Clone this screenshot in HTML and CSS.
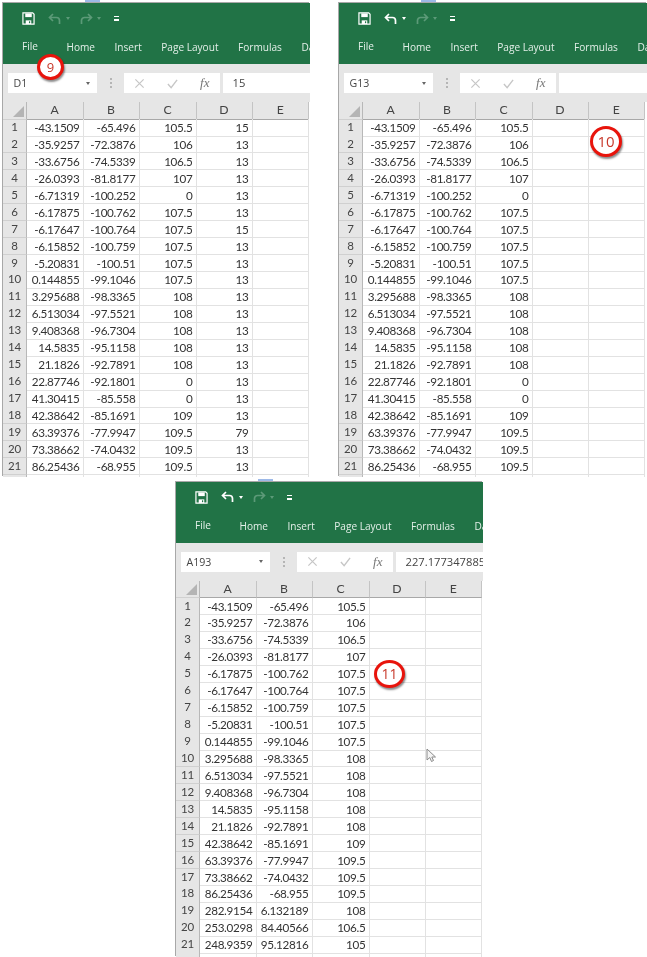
FILE: index.html
```html
<!DOCTYPE html>
<html lang="en">
<head>
<meta charset="utf-8">
<title>Excel sheets</title>
<link rel="stylesheet" href="styles.css">
</head>
<body>
<i class="tick tick-a"></i><i class="tick tick-b"></i><i class="tick tick-c"></i>
<section class="win win-a">
  <div class="ribbon">
    <div class="qat">
      <svg class="save" viewBox="0 0 14 14"><path d="M1 1h10.500L13 2.500V13H1z" fill="none" stroke="#fff" stroke-width="1.300"/><path d="M3.500 1.500h7v4h-7z" fill="#fff"/><path d="M4 9h6v4H4z" fill="#fff"/><path d="M7.500 10h1.300v2H7.500z" fill="#217346"/></svg>
      <svg class="arrow dim" viewBox="0 0 14 12"><path d="M5 1L1.500 4.500 5 8M2 4.500h6.500a3 3 0 0 1 3 3V11" fill="none" stroke="currentColor" stroke-width="1.700"/></svg><i class="caret dim"></i>
      <svg class="arrow dim" viewBox="0 0 14 12"><path d="M9 1l3.500 3.500L9 8M12 4.500H5.500a3 3 0 0 0-3 3V11" fill="none" stroke="currentColor" stroke-width="1.700"/></svg><i class="caret dim"></i>
      <span class="more"></span>
    </div>
    <nav class="tabs"><span class="file">File</span><span>Home</span><span>Insert</span><span>Page Layout</span><span>Formulas</span><span>Da</span></nav>
  </div>
  <div class="fbar">
    <div class="namebox"><span>D1</span><i class="caret"></i></div>
    <div class="dots"></div>
    <div class="fx"><svg viewBox="0 0 12 12"><path d="M1.500 1.500l9 9M10.500 1.500l-9 9" stroke="#c6c6c6" stroke-width="1.300"/></svg><svg viewBox="0 0 12 12"><path d="M1 6.500l3.500 4L11 2" fill="none" stroke="#c6c6c6" stroke-width="1.500"/></svg><em>fx</em></div>
    <div class="formula">15</div>
  </div>
  <div class="sheet">
    <div class="row head"><span class="corner"></span><span>A</span><span>B</span><span>C</span><span>D</span><span>E</span></div>
    <div class="row"><span>1</span><span>-43.1509</span><span>-65.496</span><span>105.5</span><span>15</span><span></span></div>
    <div class="row"><span>2</span><span>-35.9257</span><span>-72.3876</span><span>106</span><span>13</span><span></span></div>
    <div class="row"><span>3</span><span>-33.6756</span><span>-74.5339</span><span>106.5</span><span>13</span><span></span></div>
    <div class="row"><span>4</span><span>-26.0393</span><span>-81.8177</span><span>107</span><span>13</span><span></span></div>
    <div class="row"><span>5</span><span>-6.71319</span><span>-100.252</span><span>0</span><span>13</span><span></span></div>
    <div class="row"><span>6</span><span>-6.17875</span><span>-100.762</span><span>107.5</span><span>13</span><span></span></div>
    <div class="row"><span>7</span><span>-6.17647</span><span>-100.764</span><span>107.5</span><span>15</span><span></span></div>
    <div class="row"><span>8</span><span>-6.15852</span><span>-100.759</span><span>107.5</span><span>13</span><span></span></div>
    <div class="row"><span>9</span><span>-5.20831</span><span>-100.51</span><span>107.5</span><span>13</span><span></span></div>
    <div class="row"><span>10</span><span>0.144855</span><span>-99.1046</span><span>107.5</span><span>13</span><span></span></div>
    <div class="row"><span>11</span><span>3.295688</span><span>-98.3365</span><span>108</span><span>13</span><span></span></div>
    <div class="row"><span>12</span><span>6.513034</span><span>-97.5521</span><span>108</span><span>13</span><span></span></div>
    <div class="row"><span>13</span><span>9.408368</span><span>-96.7304</span><span>108</span><span>13</span><span></span></div>
    <div class="row"><span>14</span><span>14.5835</span><span>-95.1158</span><span>108</span><span>13</span><span></span></div>
    <div class="row"><span>15</span><span>21.1826</span><span>-92.7891</span><span>108</span><span>13</span><span></span></div>
    <div class="row"><span>16</span><span>22.87746</span><span>-92.1801</span><span>0</span><span>13</span><span></span></div>
    <div class="row"><span>17</span><span>41.30415</span><span>-85.558</span><span>0</span><span>13</span><span></span></div>
    <div class="row"><span>18</span><span>42.38642</span><span>-85.1691</span><span>109</span><span>13</span><span></span></div>
    <div class="row"><span>19</span><span>63.39376</span><span>-77.9947</span><span>109.5</span><span>79</span><span></span></div>
    <div class="row"><span>20</span><span>73.38662</span><span>-74.0432</span><span>109.5</span><span>13</span><span></span></div>
    <div class="row"><span>21</span><span>86.25436</span><span>-68.955</span><span>109.5</span><span>13</span><span></span></div>
    <div class="row"><span></span><span></span><span></span><span></span><span></span><span></span></div>
  </div>
  <div class="badge badge-9">9</div>
</section>

<section class="win win-b">
  <div class="ribbon">
    <div class="qat">
      <svg class="save" viewBox="0 0 14 14"><path d="M1 1h10.500L13 2.500V13H1z" fill="none" stroke="#fff" stroke-width="1.300"/><path d="M3.500 1.500h7v4h-7z" fill="#fff"/><path d="M4 9h6v4H4z" fill="#fff"/><path d="M7.500 10h1.300v2H7.500z" fill="#217346"/></svg>
      <svg class="arrow" viewBox="0 0 14 12"><path d="M5 1L1.500 4.500 5 8M2 4.500h6.500a3 3 0 0 1 3 3V11" fill="none" stroke="currentColor" stroke-width="1.700"/></svg><i class="caret"></i>
      <svg class="arrow dim" viewBox="0 0 14 12"><path d="M9 1l3.500 3.500L9 8M12 4.500H5.500a3 3 0 0 0-3 3V11" fill="none" stroke="currentColor" stroke-width="1.700"/></svg><i class="caret dim"></i>
      <span class="more"></span>
    </div>
    <nav class="tabs"><span class="file">File</span><span>Home</span><span>Insert</span><span>Page Layout</span><span>Formulas</span><span>Da</span></nav>
  </div>
  <div class="fbar">
    <div class="namebox"><span>G13</span><i class="caret"></i></div>
    <div class="dots"></div>
    <div class="fx"><svg viewBox="0 0 12 12"><path d="M1.500 1.500l9 9M10.500 1.500l-9 9" stroke="#c6c6c6" stroke-width="1.300"/></svg><svg viewBox="0 0 12 12"><path d="M1 6.500l3.500 4L11 2" fill="none" stroke="#c6c6c6" stroke-width="1.500"/></svg><em>fx</em></div>
    <div class="formula"></div>
  </div>
  <div class="sheet">
    <div class="row head"><span class="corner"></span><span>A</span><span>B</span><span>C</span><span>D</span><span>E</span></div>
    <div class="row"><span>1</span><span>-43.1509</span><span>-65.496</span><span>105.5</span><span></span><span></span></div>
    <div class="row"><span>2</span><span>-35.9257</span><span>-72.3876</span><span>106</span><span></span><span></span></div>
    <div class="row"><span>3</span><span>-33.6756</span><span>-74.5339</span><span>106.5</span><span></span><span></span></div>
    <div class="row"><span>4</span><span>-26.0393</span><span>-81.8177</span><span>107</span><span></span><span></span></div>
    <div class="row"><span>5</span><span>-6.71319</span><span>-100.252</span><span>0</span><span></span><span></span></div>
    <div class="row"><span>6</span><span>-6.17875</span><span>-100.762</span><span>107.5</span><span></span><span></span></div>
    <div class="row"><span>7</span><span>-6.17647</span><span>-100.764</span><span>107.5</span><span></span><span></span></div>
    <div class="row"><span>8</span><span>-6.15852</span><span>-100.759</span><span>107.5</span><span></span><span></span></div>
    <div class="row"><span>9</span><span>-5.20831</span><span>-100.51</span><span>107.5</span><span></span><span></span></div>
    <div class="row"><span>10</span><span>0.144855</span><span>-99.1046</span><span>107.5</span><span></span><span></span></div>
    <div class="row"><span>11</span><span>3.295688</span><span>-98.3365</span><span>108</span><span></span><span></span></div>
    <div class="row"><span>12</span><span>6.513034</span><span>-97.5521</span><span>108</span><span></span><span></span></div>
    <div class="row"><span class="active">13</span><span>9.408368</span><span>-96.7304</span><span>108</span><span></span><span></span></div>
    <div class="row"><span>14</span><span>14.5835</span><span>-95.1158</span><span>108</span><span></span><span></span></div>
    <div class="row"><span>15</span><span>21.1826</span><span>-92.7891</span><span>108</span><span></span><span></span></div>
    <div class="row"><span>16</span><span>22.87746</span><span>-92.1801</span><span>0</span><span></span><span></span></div>
    <div class="row"><span>17</span><span>41.30415</span><span>-85.558</span><span>0</span><span></span><span></span></div>
    <div class="row"><span>18</span><span>42.38642</span><span>-85.1691</span><span>109</span><span></span><span></span></div>
    <div class="row"><span>19</span><span>63.39376</span><span>-77.9947</span><span>109.5</span><span></span><span></span></div>
    <div class="row"><span>20</span><span>73.38662</span><span>-74.0432</span><span>109.5</span><span></span><span></span></div>
    <div class="row"><span>21</span><span>86.25436</span><span>-68.955</span><span>109.5</span><span></span><span></span></div>
    <div class="row"><span></span><span></span><span></span><span></span><span></span><span></span></div>
  </div>
  <div class="badge badge-10">10</div>
</section>

<section class="win win-c">
  <div class="ribbon">
    <div class="qat">
      <svg class="save" viewBox="0 0 14 14"><path d="M1 1h10.500L13 2.500V13H1z" fill="none" stroke="#fff" stroke-width="1.300"/><path d="M3.500 1.500h7v4h-7z" fill="#fff"/><path d="M4 9h6v4H4z" fill="#fff"/><path d="M7.500 10h1.300v2H7.500z" fill="#217346"/></svg>
      <svg class="arrow" viewBox="0 0 14 12"><path d="M5 1L1.500 4.500 5 8M2 4.500h6.500a3 3 0 0 1 3 3V11" fill="none" stroke="currentColor" stroke-width="1.700"/></svg><i class="caret"></i>
      <svg class="arrow dim" viewBox="0 0 14 12"><path d="M9 1l3.500 3.500L9 8M12 4.500H5.500a3 3 0 0 0-3 3V11" fill="none" stroke="currentColor" stroke-width="1.700"/></svg><i class="caret dim"></i>
      <span class="more"></span>
    </div>
    <nav class="tabs"><span class="file">File</span><span>Home</span><span>Insert</span><span>Page Layout</span><span>Formulas</span><span>Da</span></nav>
  </div>
  <div class="fbar">
    <div class="namebox"><span>A193</span><i class="caret"></i></div>
    <div class="dots"></div>
    <div class="fx"><svg viewBox="0 0 12 12"><path d="M1.500 1.500l9 9M10.500 1.500l-9 9" stroke="#c6c6c6" stroke-width="1.300"/></svg><svg viewBox="0 0 12 12"><path d="M1 6.500l3.500 4L11 2" fill="none" stroke="#c6c6c6" stroke-width="1.500"/></svg><em>fx</em></div>
    <div class="formula">227.177347885</div>
  </div>
  <div class="sheet">
    <div class="row head"><span class="corner"></span><span>A</span><span>B</span><span>C</span><span>D</span><span>E</span></div>
    <div class="row"><span>1</span><span>-43.1509</span><span>-65.496</span><span>105.5</span><span></span><span></span></div>
    <div class="row"><span>2</span><span>-35.9257</span><span>-72.3876</span><span>106</span><span></span><span></span></div>
    <div class="row"><span>3</span><span>-33.6756</span><span>-74.5339</span><span>106.5</span><span></span><span></span></div>
    <div class="row"><span>4</span><span>-26.0393</span><span>-81.8177</span><span>107</span><span></span><span></span></div>
    <div class="row"><span>5</span><span>-6.17875</span><span>-100.762</span><span>107.5</span><span></span><span></span></div>
    <div class="row"><span>6</span><span>-6.17647</span><span>-100.764</span><span>107.5</span><span></span><span></span></div>
    <div class="row"><span>7</span><span>-6.15852</span><span>-100.759</span><span>107.5</span><span></span><span></span></div>
    <div class="row"><span>8</span><span>-5.20831</span><span>-100.51</span><span>107.5</span><span></span><span></span></div>
    <div class="row"><span>9</span><span>0.144855</span><span>-99.1046</span><span>107.5</span><span></span><span></span></div>
    <div class="row"><span>10</span><span>3.295688</span><span>-98.3365</span><span>108</span><span></span><span></span></div>
    <div class="row"><span>11</span><span>6.513034</span><span>-97.5521</span><span>108</span><span></span><span></span></div>
    <div class="row"><span>12</span><span>9.408368</span><span>-96.7304</span><span>108</span><span></span><span></span></div>
    <div class="row"><span>13</span><span>14.5835</span><span>-95.1158</span><span>108</span><span></span><span></span></div>
    <div class="row"><span>14</span><span>21.1826</span><span>-92.7891</span><span>108</span><span></span><span></span></div>
    <div class="row"><span>15</span><span>42.38642</span><span>-85.1691</span><span>109</span><span></span><span></span></div>
    <div class="row"><span>16</span><span>63.39376</span><span>-77.9947</span><span>109.5</span><span></span><span></span></div>
    <div class="row"><span>17</span><span>73.38662</span><span>-74.0432</span><span>109.5</span><span></span><span></span></div>
    <div class="row"><span>18</span><span>86.25436</span><span>-68.955</span><span>109.5</span><span></span><span></span></div>
    <div class="row"><span>19</span><span>282.9154</span><span>6.132189</span><span>108</span><span></span><span></span></div>
    <div class="row"><span>20</span><span>253.0298</span><span>84.40566</span><span>106.5</span><span></span><span></span></div>
    <div class="row"><span>21</span><span>248.9359</span><span>95.12816</span><span>105</span><span></span><span></span></div>
    <div class="row"><span></span><span></span><span></span><span></span><span></span><span></span></div>
  </div>
  <div class="badge badge-11">11</div>
  <svg class="cursor" viewBox="0 0 10 15"><path d="M1 1v11l2.800-2.500L5.500 13.500l2-1L5.800 9H9.500z" fill="#f4f4f4" stroke="#8a8a8a" stroke-width="1"/></svg>
</section>
</body>
</html>
```
FILE: styles.css
```css
html, body { margin: 0; padding: 0; background: #fff; }
body { position: relative; width: 647px; height: 957px; overflow: hidden; }

.win {
  position: absolute;
  width: 307px;
  height: 474px;
  background: #e6e6e6;
  overflow: hidden;
  font-family: "Lato", "Liberation Sans", sans-serif;
  filter: blur(.45px);
  box-shadow: -1px -1px 0 #a8a8a8;
}
.win-a { left: 3px; top: 3px; }
.win-b { left: 339px; top: 3px; width: 308px; }
.win-c { left: 176px; top: 481.500px; height: 475.500px; }

.tick { position: absolute; height: 2px; background: #9db9e8; }
.tick-a { left: 85px; top: 0; width: 15px; }
.tick-b { left: 421px; top: 0; width: 15px; }
.tick-c { left: 258px; top: 478.500px; width: 15px; }

.ribbon { height: 61px; background: #217346; color: #fff; }
.qat { display: flex; align-items: center; height: 31px; padding: 0 0 0 19px; }
.save { width: 13px; height: 13px; margin-right: 13px; }
.arrow { width: 14px; height: 12px; color: #fff; }
.dim { color: #5c9a78; }
.caret {
  width: 0; height: 0; margin: 0 9px 0 4px;
  border: 2.500px solid transparent; border-top: 3px solid currentColor; border-bottom: 0;
}
.more { width: 5px; height: 5px; margin-left: 4px; border-top: 1px solid #fff; border-bottom: 2px solid #fff; box-sizing: border-box; }
.tabs { display: flex; gap: 19.500px; padding-left: 19px; font: 10.100px/16px "Open Sans", sans-serif; white-space: nowrap; color: #e3efe8; margin-top: 5px; }
.file { margin: -1px 9px 0 0; }

.fbar { display: flex; align-items: stretch; height: 20px; margin-top: 9px; padding-left: 4.500px; }
.namebox {
  display: flex; align-items: center; justify-content: space-between;
  width: 89px; padding: 0 7px 0 6px; box-sizing: border-box;
  background: #fff; color: #444; font: 10.600px "Open Sans", sans-serif;
}
.namebox .caret { margin: 0; color: #666; }
.dots { width: 2px; margin: 5px 12px 5px 13px; background: repeating-linear-gradient(#b5b5b5 0 2px, transparent 2px 4px); }
.fx {
  display: flex; align-items: center; justify-content: space-between;
  width: 96px; padding: 0 10px; box-sizing: border-box; background: #fff;
}
.fx svg { width: 11px; height: 11px; }
.fx em { font: italic 13px "Liberation Serif", serif; color: #777; }
.formula {
  flex: 1; margin-left: 3px; padding-left: 10px; background: #fff;
  color: #444; font: 11.200px/20px "Open Sans", sans-serif; white-space: nowrap; overflow: hidden;
}

.sheet { margin-top: 9px; background: #fff; color: #333; }
.row {
  display: grid;
  grid-template-columns: 24px 56.500px 56px 57px 56px 56.500px;
  height: 16.950px;
  font-size: 11.700px;
  letter-spacing: -.3px;
  line-height: 16.500px;
}
.row span {
  box-sizing: border-box;
  padding-right: 3px;
  text-align: right;
  border-right: 1px solid #e2e2e2;
  border-bottom: 1px solid #e2e2e2;
  white-space: nowrap;
}
.row span:first-child {
  padding: 0;
  text-align: center;
  background: #e6e6e6;
  border-right: 1px solid #b8b8b8;
  border-bottom: 1px solid #d0d0d0;
  color: #444;
  font-size: 11.500px;
  letter-spacing: -.2px;
}
.row .active { background: #d2d2d2; color: #217346; }
.head { height: 17px; }
.head span {
  padding: 0;
  text-align: center;
  background: #e6e6e6;
  border-right: 1px solid #c4c4c4;
  border-bottom: 1px solid #a8a8a8;
  color: #444;
  font-size: 12.200px;
  letter-spacing: 0;
}
.head .corner { position: relative; }
.corner::after {
  content: ""; position: absolute; right: 2px; bottom: 2px;
  border-left: 11px solid transparent; border-bottom: 11px solid #b4b4b4;
}

.badge {
  position: absolute;
  box-sizing: border-box;
  border: 3px solid #e8140c;
  border-radius: 50%;
  background: #fff;
  color: #c8392b;
  font-family: "Open Sans", sans-serif;
  text-align: center;
  box-shadow: 1px 2px 2px rgba(0,0,0,.45);
}
.badge-9 { left: 34px; top: 51px; width: 27px; height: 26px; font-size: 13px; line-height: 20px; }
.badge-10 { left: 251px; top: 123px; width: 32px; height: 31px; font-size: 15px; line-height: 25px; }
.badge-11 { left: 198px; top: 178.500px; width: 31px; height: 28px; font-size: 14px; line-height: 22px; }
.cursor { position: absolute; left: 250px; top: 266px; width: 10px; height: 15px; }
```
